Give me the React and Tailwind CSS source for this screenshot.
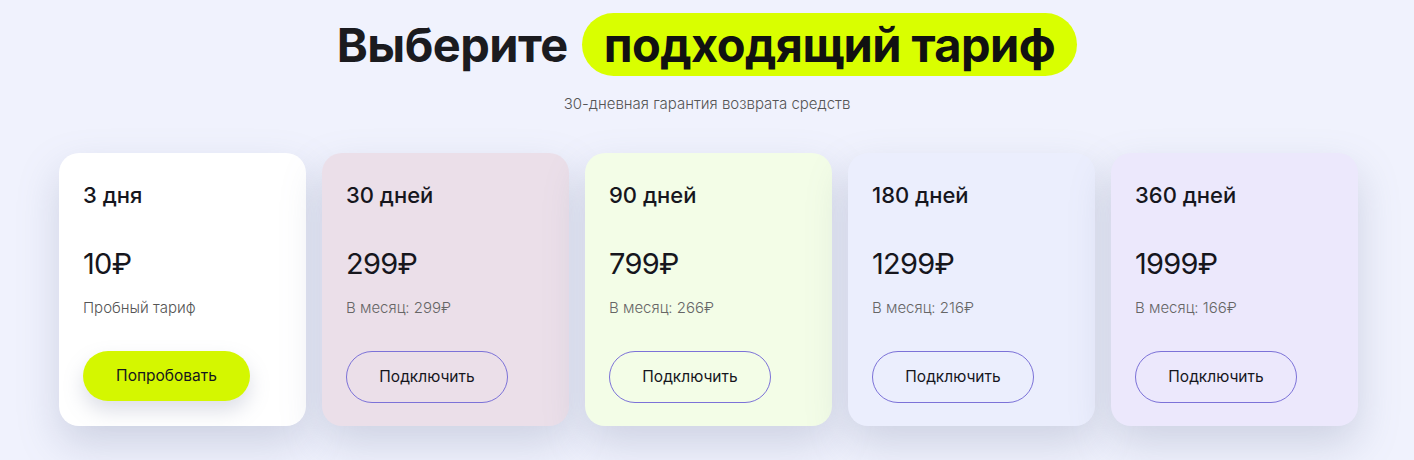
import React from 'react';

const plans = [
  { title: '3 дня', price: '10₽', note: 'Пробный тариф', bg: 'bg-white', trial: true },
  { title: '30 дней', price: '299₽', note: 'В месяц: 299₽', bg: 'bg-[#ebdfe9]' },
  { title: '90 дней', price: '799₽', note: 'В месяц: 266₽', bg: 'bg-[#f3fde7]' },
  { title: '180 дней', price: '1299₽', note: 'В месяц: 216₽', bg: 'bg-[#ebeefd]' },
  { title: '360 дней', price: '1999₽', note: 'В месяц: 166₽', bg: 'bg-[#ece8fc]' },
];

function PlanCard({ plan }) {
  return (
    <div className={`${plan.bg} w-[247px] h-[273px] rounded-[20px] pt-[28px] px-6 shadow-[0_18px_40px_rgba(120,128,160,0.28)] flex flex-col`}>
      <h3 className="text-[22px] leading-[28px] font-medium text-[#16161d]">{plan.title}</h3>
      <div className="mt-[37px] text-[29px] leading-[36px] font-normal text-[#16161d] tracking-tight">{plan.price}</div>
      <p className={`mt-[16px] text-[15px] leading-[20px] font-light ${plan.trial ? 'text-[#555]' : 'text-[#666]'}`}>{plan.note}</p>
      {plan.trial ? (
        <button className="mt-[33px] w-[167px] h-[50px] rounded-full bg-[#d4f700] text-[15.5px] text-[#16161d] shadow-[0_10px_20px_rgba(120,128,160,0.25)]">
          Попробовать
        </button>
      ) : (
        <button className="mt-[33px] w-[162px] h-[52px] rounded-full border border-[#7c72d8] text-[15.5px] text-[#16161d]">
          Подключить
        </button>
      )}
    </div>
  );
}

export default function App() {
  return (
    <div className="min-h-[460px] bg-[#f0f2fd] pt-[13px]" style={{ fontFamily: 'Inter, "Noto Sans", sans-serif' }}>
      <div className="flex items-center justify-center gap-[14px]">
        <h1 className="text-[47px] font-bold text-[#1b1b1f] tracking-[-0.012em] leading-none">Выберите</h1>
        <span className="bg-[#d9ff00] rounded-full h-[63px] px-[22px] flex items-center text-[47px] font-bold text-[#111] tracking-[-0.012em] leading-none">
          подходящий тариф
        </span>
      </div>
      <p className="mt-[17px] text-center text-[15px] text-[#555] font-light">30-дневная гарантия возврата средств</p>
      <div className="mt-[37px] flex justify-center gap-4 pl-[3px]">
        {plans.map((p) => (
          <PlanCard key={p.title} plan={p} />
        ))}
      </div>
    </div>
  );
}
